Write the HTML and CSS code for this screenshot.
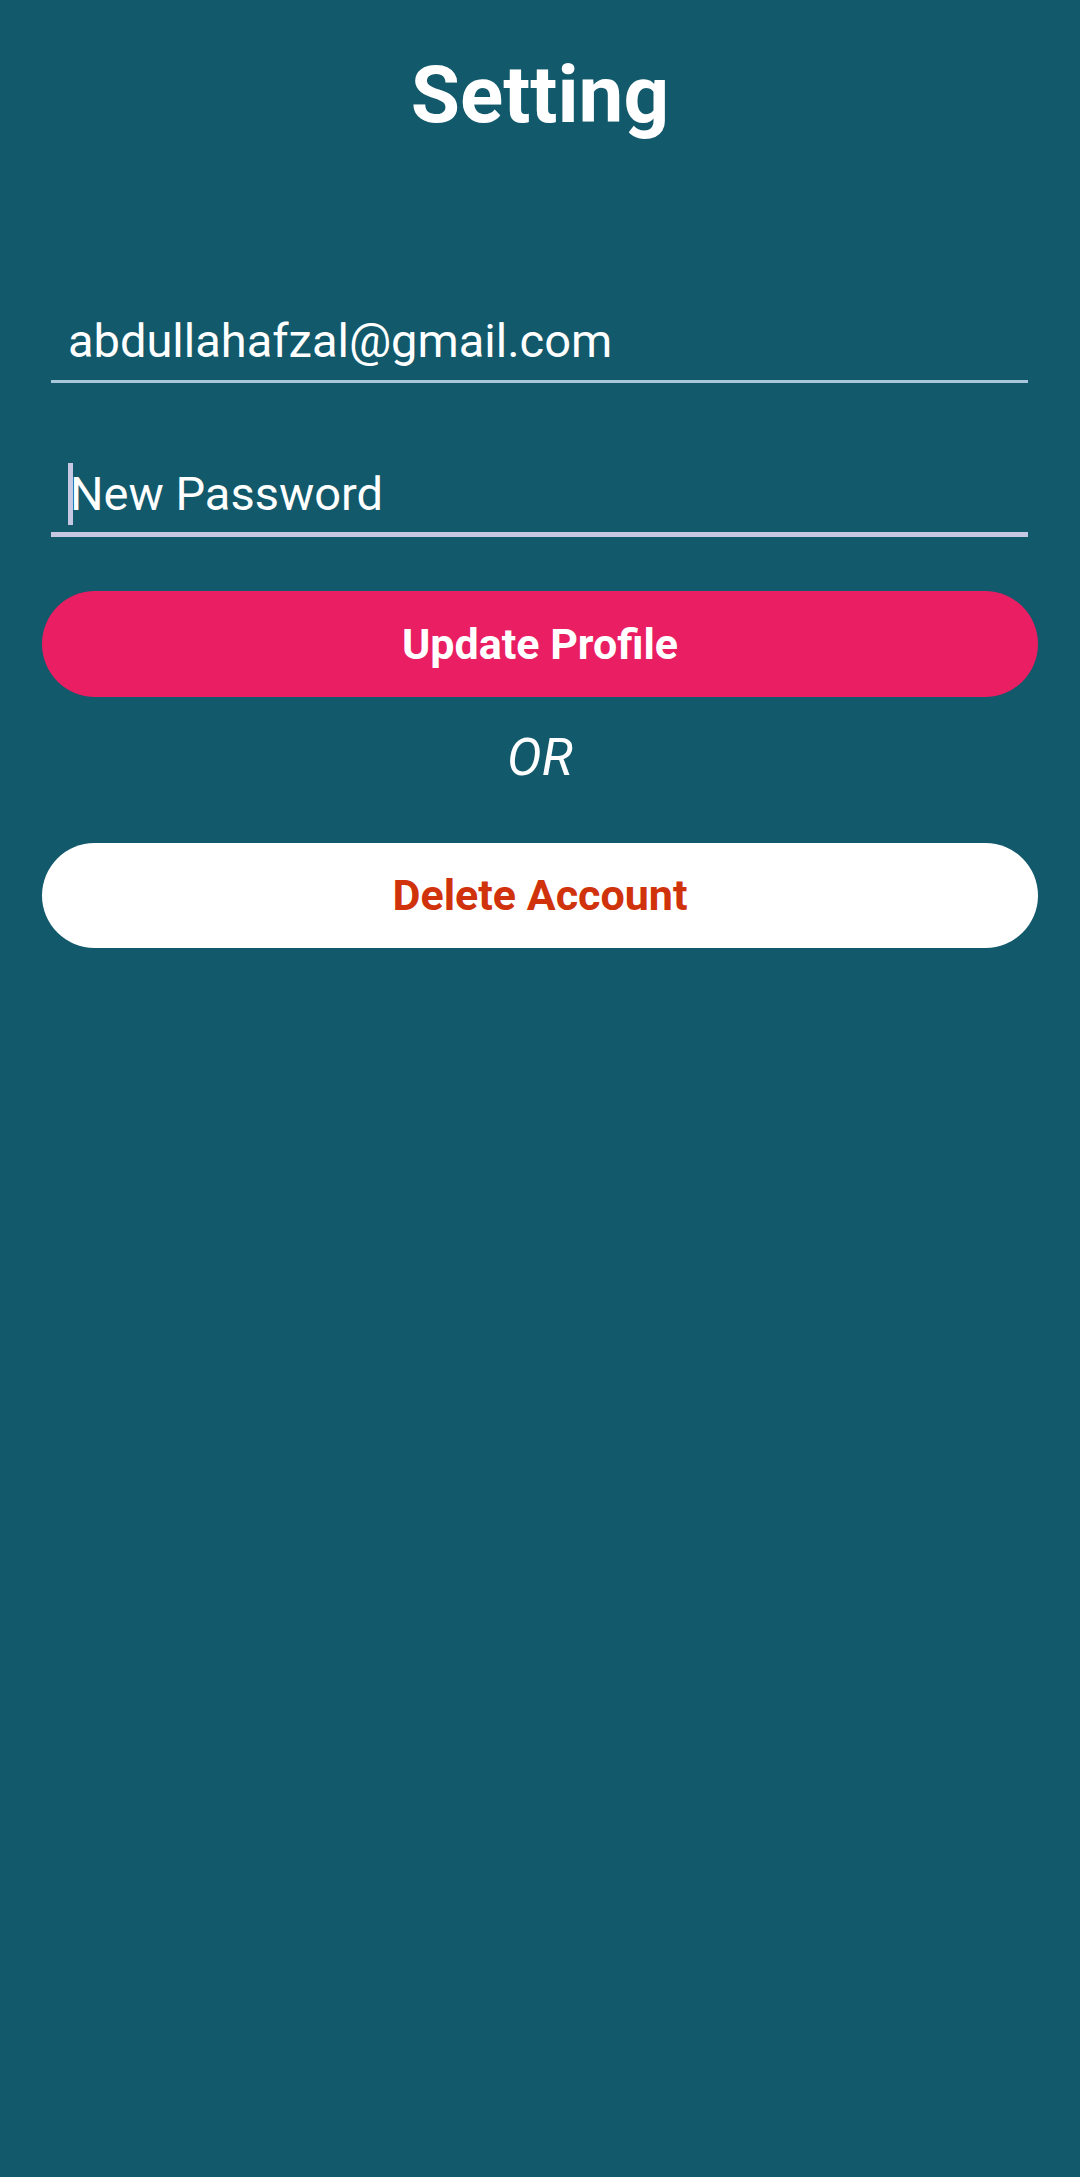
FILE: index.html
```html
<!DOCTYPE html>
<html>
<head>
<meta charset="utf-8">
<link rel="stylesheet" href="styles.css">
</head>
<body>
<div class="screen">
  <h1 class="title">Setting</h1>
  <div class="field field-email">
    <span class="field-text">abdullahafzal@gmail.com</span>
  </div>
  <div class="field field-password">
    <span class="cursor"></span>
    <span class="field-text">New Password</span>
  </div>
  <div class="btn btn-update">Update Profile</div>
  <div class="or">OR</div>
  <div class="btn btn-delete">Delete Account</div>
</div>
</body>
</html>
```
FILE: styles.css
```css
html, body {
  margin: 0;
  padding: 0;
  background: #11596b;
}
.screen {
  width: 1080px;
  height: 2177px;
  background: #11596b;
  font-family: Roboto, "Liberation Sans", sans-serif;
  color: #ffffff;
  display: flex;
  flex-direction: column;
  padding-top: 55px;
  box-sizing: border-box;
}
.title {
  margin: 0;
  text-align: center;
  font-size: 80px;
  line-height: 80px;
  font-weight: 700;
}
.field {
  margin-left: 51px;
  width: 977px;
  display: flex;
  align-items: center;
  font-size: 47px;
  line-height: 47px;
}
.field-text {
  padding-left: 17px;
}
.field-email {
  margin-top: 182px;
  padding-bottom: 16px;
  border-bottom: 3px solid #a9c7da;
}
.field-password {
  margin-top: 87px;
  padding-bottom: 15px;
  border-bottom: 5px solid #c6c7e2;
}
.cursor {
  width: 5px;
  height: 62px;
  margin: -8px -22px -8px 17px;
  background: #c6c7e2;
}
.field-password .field-text {
  padding-left: 19px;
}
.btn {
  margin: 0 42px;
  height: 106px;
  border-radius: 53px;
  display: flex;
  align-items: center;
  justify-content: center;
  font-size: 43px;
  line-height: 43px;
  font-weight: 700;
}
.btn-update {
  margin-top: 54px;
  background: #e91e63;
  color: #ffffff;
}
.or {
  margin-top: 35px;
  text-align: center;
  font-size: 52px;
  line-height: 52px;
  font-style: italic;
}
.btn-delete {
  margin-top: 59px;
  height: 105px;
  background: #ffffff;
  color: #d0330c;
}
```
